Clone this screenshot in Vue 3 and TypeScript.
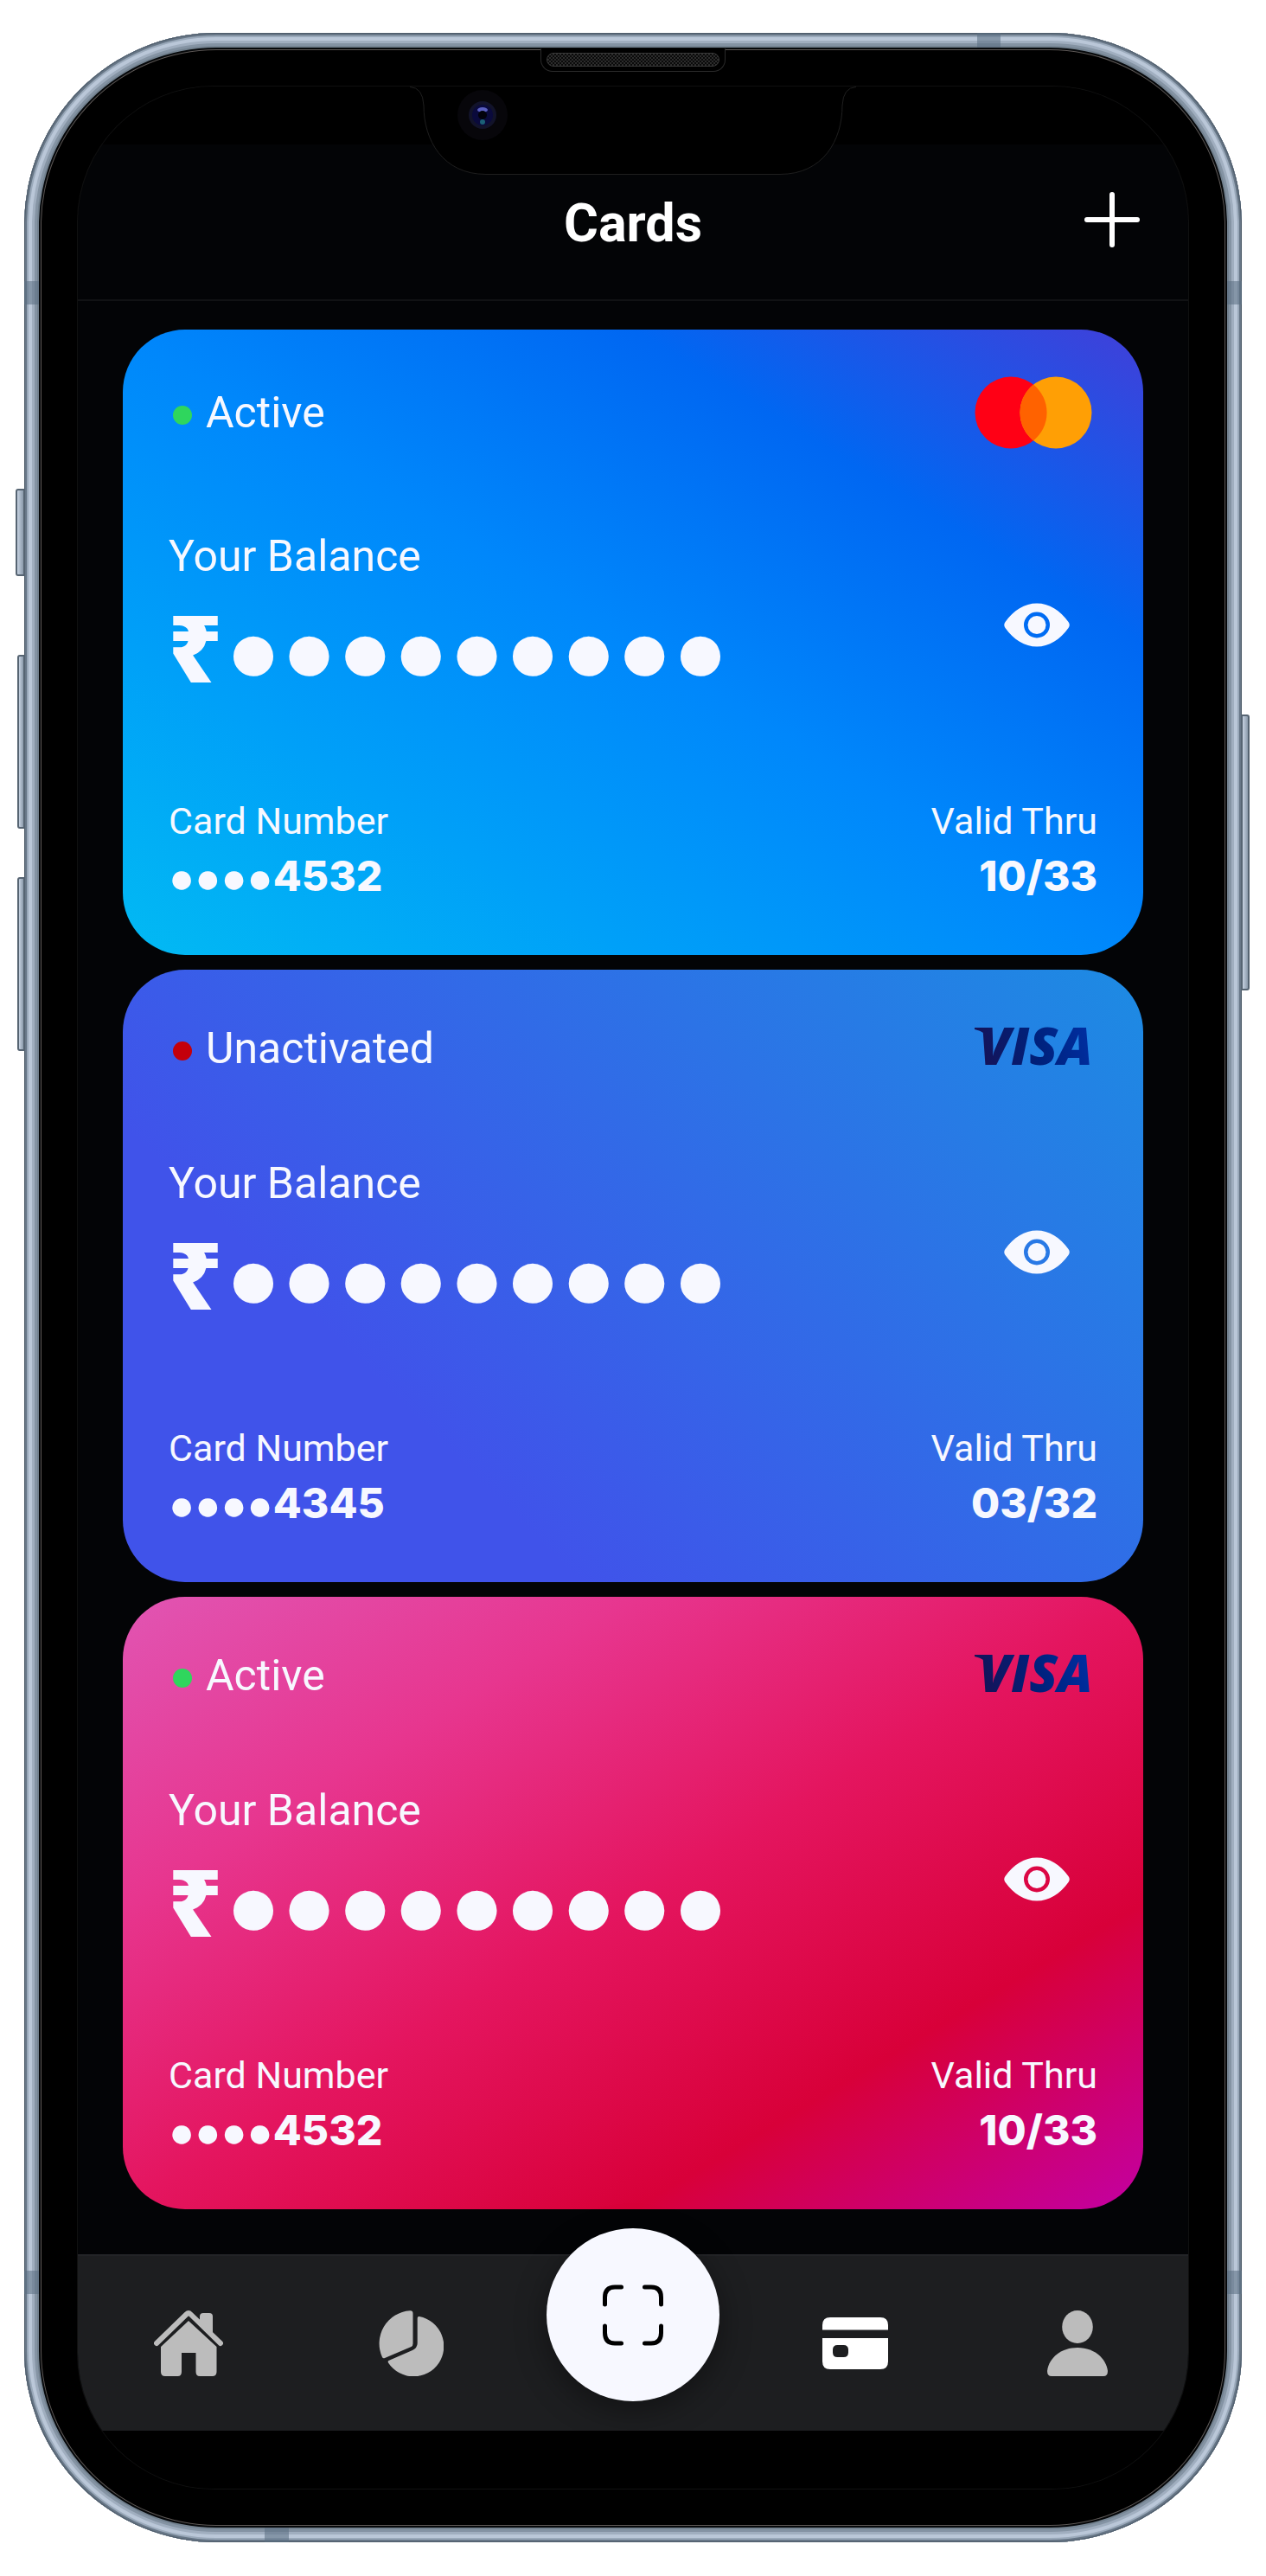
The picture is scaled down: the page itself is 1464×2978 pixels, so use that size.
<script setup lang="ts">
import { ref } from 'vue'

interface BankCard {
  id: number
  status: 'Active' | 'Unactivated'
  network: 'mastercard' | 'visa'
  theme: 'sky' | 'indigo' | 'rose'
  balance: string
  lastDigits: string
  validThru: string
}

const cards: BankCard[] = [
  { id: 1, status: 'Active', network: 'mastercard', theme: 'sky', balance: '●●●●●●●●●', lastDigits: '4532', validThru: '10/33' },
  { id: 2, status: 'Unactivated', network: 'visa', theme: 'indigo', balance: '●●●●●●●●●', lastDigits: '4345', validThru: '03/32' },
  { id: 3, status: 'Active', network: 'visa', theme: 'rose', balance: '●●●●●●●●●', lastDigits: '4532', validThru: '10/33' },
]

const activeTab = ref('cards')
</script>

<template>
  <div class="stage">
    <div class="phone">
      <span class="key key-silent"></span>
      <span class="key key-up"></span>
      <span class="key key-down"></span>
      <span class="key key-power"></span>
      <span class="band band-side band-left band-high"></span>
      <span class="band band-side band-right band-high"></span>
      <span class="band band-side band-left band-low"></span>
      <span class="band band-side band-right band-low"></span>
      <span class="band band-top"></span>
      <span class="band band-bottom"></span>
      <span class="speaker"><span class="grill"></span></span>

      <div class="screen">
        <div class="status-bar"></div>

        <header class="header">
          <h1 class="title">Cards</h1>
          <button class="add" type="button" aria-label="Add card">
            <svg width="64" height="64" viewBox="0 0 64 64" fill="none" stroke="#fff" stroke-width="6" stroke-linecap="round">
              <path d="M32 3v58M3 32h58" />
            </svg>
          </button>
        </header>

        <main class="cards">
          <article v-for="card in cards" :key="card.id" class="card" :class="card.theme">
            <div class="card-head" :class="card.network">
              <span class="status">
                <span class="dot" :class="{ off: card.status !== 'Active' }"></span>
                {{ card.status }}
              </span>
              <svg v-if="card.network === 'mastercard'" class="logo" width="136" height="82" viewBox="0 0 136 82" role="img" aria-label="Mastercard">
                <circle cx="42" cy="41" r="41.5" fill="#ff0015" />
                <circle cx="94" cy="41" r="41.5" fill="#ff9f05" />
                <path d="M68 8.600A41.500 41.500 0 0 1 68 73.400A41.500 41.500 0 0 1 68 8.600Z" fill="#ff6200" />
              </svg>
              <svg v-else class="logo" width="136" height="48" viewBox="0 0 136 48" role="img" aria-label="Visa">
                <defs>
                  <linearGradient :id="'visa-' + card.id" gradientUnits="userSpaceOnUse" x1="10" y1="40" x2="130" y2="4">
                    <stop offset="0" stop-color="#151358" />
                    <stop offset=".5" stop-color="#00207a" />
                    <stop offset="1" stop-color="#002ea0" />
                  </linearGradient>
                </defs>
                <path d="M0 0H18V16Q13 4 0 2Z" :fill="`url(#visa-${card.id})`" />
                <text x="5" y="43" class="visa-word" :fill="`url(#visa-${card.id})`">VISA</text>
              </svg>
            </div>

            <div class="balance">
              <div>
                <p class="balance-label">Your Balance</p>
                <p class="amount"><span>₹</span><span>{{ card.balance }}</span></p>
              </div>
              <button class="reveal" type="button" aria-label="Show balance">
                <svg width="76" height="51" viewBox="0 0 76 50" fill="#f7f8ff">
                  <path fill-rule="evenodd" d="M1.500 21.500C11 8 24 0 38 0S65 8 74.500 21.500Q77 25 74.500 28.500C65 42 52 50 38 50S11 42 1.500 28.500Q-1 25 1.500 21.500ZM38 10a15 15 0 1 0 0 30a15 15 0 1 0 0-30Z" />
                  <circle cx="38" cy="25" r="10.500" />
                </svg>
              </button>
            </div>

            <dl class="details">
              <div>
                <dt>Card Number</dt>
                <dd><span class="mask">●●●●</span>{{ card.lastDigits }}</dd>
              </div>
              <div class="valid">
                <dt>Valid Thru</dt>
                <dd>{{ card.validThru }}</dd>
              </div>
            </dl>
          </article>
        </main>

        <nav class="nav">
          <a href="#home" class="tab" :class="{ current: activeTab === 'home' }" aria-label="Home" @click.prevent="activeTab = 'home'">
            <svg width="80" height="76" viewBox="0 0 80 76" fill="currentColor">
              <path d="M3 38L37.500 4.500Q40 2 42.500 4.500L77 38" fill="none" stroke="currentColor" stroke-width="6" stroke-linecap="round" />
              <path d="M53 12V7Q53 3 57 3H64Q68 3 68 7V28Z" />
              <path d="M40 12L72.500 42V71Q72.500 76 67.500 76H53Q48.500 76 48.500 71V49H32V71Q32 76 27.500 76H13Q8 76 8 71V42Z" />
            </svg>
          </a>
          <a href="#stats" class="tab" :class="{ current: activeTab === 'stats' }" aria-label="Statistics" @click.prevent="activeTab = 'stats'">
            <svg width="76" height="76" viewBox="0 0 76 76" fill="currentColor">
              <path d="M37 .300Q40.500 0 40.500 3.500V38.500Q40.500 41 38.500 42L8 55Q6 56 5 54A38 38 0 0 1 37 .300Z" />
              <path d="M45.700 9Q45.700 6.500 48 7A35 35 0 1 1 12 60.500Q11 58.500 13 57.800L40 46Q45.700 43 45.700 38Z" />
            </svg>
          </a>
          <button class="scan" type="button" aria-label="Scan">
            <svg width="70" height="71" viewBox="0 0 70 71" fill="none" stroke="#000" stroke-width="5" stroke-linecap="round">
              <path d="M2.500 23V15Q2.500 3 14 3H21.500M48.500 3H56Q67.500 3 67.500 15V23M67.500 48V56Q67.500 68 56 68H48.500M21.500 68H14Q2.500 68 2.500 56V48" />
            </svg>
          </button>
          <a href="#cards" class="tab" :class="{ current: activeTab === 'cards' }" aria-label="Cards" @click.prevent="activeTab = 'cards'">
            <svg width="76" height="60" viewBox="0 0 76 60" fill="currentColor">
              <path d="M0 14.500V9Q0 0 9 0H67Q76 0 76 9V14.500Z" />
              <path fill-rule="evenodd" d="M0 24H76V51Q76 60 67 60H9Q0 60 0 51ZM17.500 32Q12 32 12 37.500V40.500Q12 46 17.500 46H24.500Q30 46 30 40.500V37.500Q30 32 24.500 32Z" />
            </svg>
          </a>
          <a href="#profile" class="tab" :class="{ current: activeTab === 'profile' }" aria-label="Profile" @click.prevent="activeTab = 'profile'">
            <svg width="70" height="76" viewBox="0 0 70 76" fill="currentColor">
              <ellipse cx="35" cy="19" rx="17.800" ry="19" />
              <path d="M5 76Q0 76 0 70C2 54 17 43 35 43S68 54 70 70Q70 76 65 76Z" />
            </svg>
          </a>
        </nav>
        <div class="home-area"></div>
      </div>

      <svg class="notch" width="516" height="102" viewBox="0 0 516 102">
        <path d="M0 .500Q15 1 16 22C16 62 38 101.500 88 101.500H428C478 101.500 500 62 500 22Q501 1 516 .500" fill="#000" stroke="#1f1f1f" />
        <circle cx="84" cy="33" r="29" fill="#07060a" />
        <circle cx="84" cy="33" r="16" fill="#12132a" />
        <circle cx="84" cy="33" r="12" fill="#0a0a3c" />
        <ellipse cx="84" cy="27" rx="6" ry="3" fill="#5a5fc0" />
        <circle cx="84" cy="33" r="5" fill="#02020c" />
        <circle cx="84" cy="41" r="3" fill="#1b6076" />
      </svg>
    </div>
  </div>
</template>

<style>
body {
  margin: 0;
  background: #fff;
}
</style>

<style scoped>
.stage {
  padding: 38px 28px;
  font-family: Roboto, "Liberation Sans", sans-serif;
  color: #f7f8ff;
}

.phone {
  position: relative;
  padding: 62px;
  border-radius: 222px;
  background: #000;
  box-shadow:
    inset 0 0 0 1px #4d5b69,
    inset 0 0 0 3px #677686,
    inset 0 0 0 5px #9aa9ba,
    inset 0 0 0 9px #bac7d8,
    inset 0 0 0 12px #a0aebf,
    inset 0 0 0 15px #8493a3,
    inset 0 0 0 17px #738290,
    inset 0 0 0 19px #06080a,
    inset 0 0 0 20px #5c5755;
}

.key {
  position: absolute;
  box-sizing: border-box;
  border: 2px solid #566472;
  background: linear-gradient(90deg, #c5d1e0, #8b9aab);
}

.key-silent {
  left: -10px;
  top: 527px;
  width: 11px;
  height: 101px;
  border-radius: 3px 0 0 3px;
}

.key-up,
.key-down {
  left: -8px;
  width: 9px;
  height: 201px;
  border-radius: 3px 0 0 3px;
}

.key-up {
  top: 719px;
}

.key-down {
  top: 976px;
}

.key-power {
  right: -9px;
  top: 788px;
  width: 10px;
  height: 319px;
  border-radius: 0 3px 3px 0;
}

.band {
  position: absolute;
  background: rgba(90, 110, 130, 0.55);
}

.band-side {
  width: 17px;
  height: 27px;
}

.band-left {
  left: 0;
}

.band-right {
  right: 0;
}

.band-high {
  top: 287px;
}

.band-low {
  bottom: 287px;
}

.band-top {
  top: 0;
  right: 279px;
  width: 27px;
  height: 17px;
}

.band-bottom {
  bottom: 0;
  left: 278px;
  width: 28px;
  height: 17px;
}

.speaker {
  position: absolute;
  top: 18px;
  left: 50%;
  box-sizing: border-box;
  width: 214px;
  height: 27px;
  margin-left: -107px;
  padding: 5px 6px;
  border: 1px solid #2b2b2b;
  border-top: 0;
  border-radius: 0 0 14px 14px;
  background: #000;
}

.grill {
  display: block;
  height: 14px;
  border: 1px solid #3a3a3a;
  border-radius: 8px;
  background: repeating-conic-gradient(#2c2c2c 0 25%, #0a0a0a 0 50%) 0 0 / 4px 4px;
}

.notch {
  position: absolute;
  top: 62px;
  left: 50%;
  margin-left: -258px;
}

.screen {
  overflow: hidden;
  border-radius: 157px;
  background: #030406;
  box-shadow: 0 0 0 1px #101010;
}

.status-bar,
.home-area {
  height: 67px;
  background: #000;
}

.header {
  display: grid;
  grid-template-columns: 1fr auto 1fr;
  align-items: center;
  box-sizing: border-box;
  height: 181px;
  padding: 0 56px 6px;
  border-bottom: 2px solid #111214;
}

.title {
  grid-column: 2;
  margin: 0;
  padding-top: 8px;
  font-size: 61px;
  line-height: 72px;
  font-weight: 700;
  color: #fff;
}

.add {
  justify-self: end;
  height: 64px;
  padding: 0;
  border: 0;
  background: none;
}

.cards {
  display: flex;
  flex-direction: column;
  gap: 17px;
  padding: 33px 52px 52px;
}

.card {
  padding: 55px 53px 61px;
  border-radius: 72px;
}

.sky {
  background: linear-gradient(to top right, #02baf3, #00a0f8 25%, #0087fb 50%, #0067f2 75%, #413fd9);
}

.indigo {
  background: linear-gradient(45deg, #4053ea 28%, #1d8be3);
}

.rose {
  background: linear-gradient(to bottom right, #e155b3, #e7368f 25%, #e4155f 50%, #d80039 75%, #c300a3);
}

.card-head {
  display: flex;
  align-items: center;
  justify-content: space-between;
}

.mastercard {
  padding-bottom: 5px;
}

.status {
  display: flex;
  align-items: center;
  gap: 16px;
  padding-left: 5px;
  font-size: 50px;
  line-height: 72px;
}

.dot {
  width: 22px;
  height: 22px;
  margin-top: 6px;
  border-radius: 50%;
  background: #2fd65d;
}

.dot.off {
  background: #c4000b;
}

.logo {
  margin-right: 6px;
  overflow: visible;
}

.visa-word {
  font: italic 800 60px "Open Sans", sans-serif;
}

.balance {
  display: flex;
  align-items: center;
  justify-content: space-between;
  margin-top: 90px;
}

.balance-label {
  margin: 0 0 20px;
  font-size: 50px;
  line-height: 60px;
}

.amount {
  display: flex;
  gap: 3px;
  margin: 0;
  font-family: "Noto Sans", sans-serif;
  font-size: 107px;
  line-height: 110px;
  font-weight: 900;
}

.reveal {
  display: flex;
  margin-top: 28px;
  padding: 0 32px;
  border: 0;
  background: none;
}

.details {
  display: flex;
  justify-content: space-between;
  margin: 120px 0 0;
}

.details dt {
  font-size: 43px;
  line-height: 52px;
}

.details dd {
  display: flex;
  margin: 8px 0 0;
  font-family: Inter, sans-serif;
  font-size: 48px;
  line-height: 60px;
  font-weight: 800;
}

.mask {
  font-family: "Noto Sans", sans-serif;
  font-size: 50px;
}

.details .valid dd {
  justify-content: flex-end;
}

.nav {
  display: grid;
  grid-template-columns: repeat(5, 1fr);
  align-items: center;
  justify-items: center;
  box-sizing: border-box;
  height: 204px;
  border-top: 2px solid #232427;
  background: #1d1e20;
}

.tab {
  display: flex;
  color: #bcbcbc;
}

.tab.current {
  color: #fff;
}

.scan {
  display: flex;
  align-items: center;
  justify-content: center;
  width: 200px;
  height: 200px;
  margin-top: -66px;
  padding: 0;
  border: 0;
  border-radius: 50%;
  background: #f7f8ff;
  box-shadow: 0 10px 36px rgba(0, 0, 0, 0.4);
}
</style>
